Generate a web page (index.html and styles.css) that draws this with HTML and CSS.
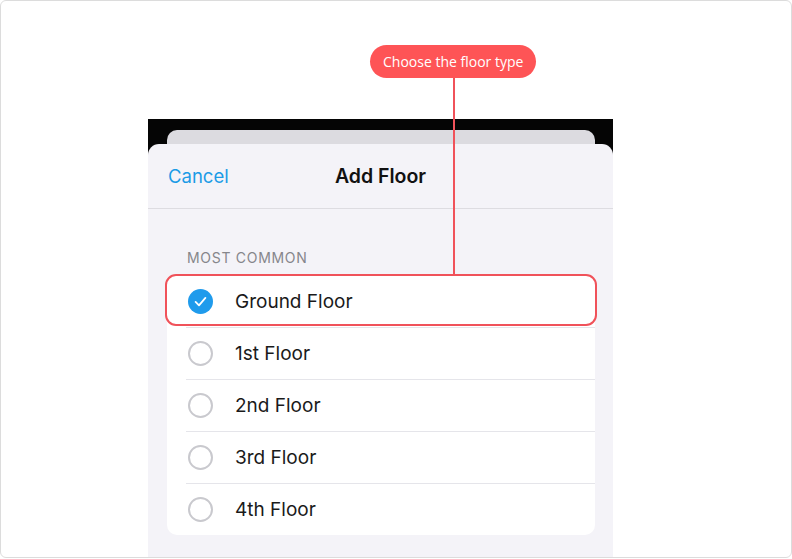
FILE: index.html
```html
<!DOCTYPE html>
<html lang="en">

<head>
    <meta charset="UTF-8">
    <meta name="viewport" content="width=device-width, initial-scale=1.0">
    <title>Add Floor</title>
    <link rel="stylesheet" href="styles.css">
</head>

<body>
    <div class="frame">
        <div class="phone">
            <div class="back-card"></div>
            <div class="sheet">
                <div class="sheet-header">
                    <a href="#" class="cancel">Cancel</a>
                    <h1>Add Floor</h1>
                    <span></span>
                </div>
                <div class="section-label">MOST COMMON</div>
                <ul class="floor-list">
                    <li class="selected">
                        <span class="radio">
                            <svg width="25" height="25" viewBox="0 0 25 25">
                                <circle cx="12.5" cy="12.5" r="12.5" fill="#1f9bec" />
                                <path d="M7.6 12.9 L11 16.3 L17.4 8.9" fill="none" stroke="#fff" stroke-width="1.8"
                                    stroke-linecap="round" stroke-linejoin="round" />
                            </svg>
                        </span>
                        <span class="label">Ground Floor</span>
                        <span class="highlight"></span>
                    </li>
                    <li><span class="radio"></span><span class="label">1st Floor</span></li>
                    <li><span class="radio"></span><span class="label">2nd Floor</span></li>
                    <li><span class="radio"></span><span class="label">3rd Floor</span></li>
                    <li><span class="radio"></span><span class="label">4th Floor</span></li>
                </ul>
            </div>
        </div>

        <!-- annotation over the screenshot -->
        <div class="callout">
            <div class="pill">Choose the floor type</div>
            <div class="connector"></div>
        </div>
    </div>
</body>

</html>
```

FILE: styles.css
```css
/* page frame */
html,
body {
    margin: 0;
    padding: 0;
    background: #fff;
}

.frame {
    position: relative;
    box-sizing: border-box;
    width: 792px;
    height: 558px;
    border: 1px solid #dcdcdc;
    border-radius: 6px;
    overflow: hidden;
    padding-top: 118px;
    font-family: Inter, "Liberation Sans", sans-serif;
}

/* phone screenshot */
.phone {
    width: 465px;
    height: 100%;
    margin-left: 147px;
    background: #050505;
    padding-top: 11px;
    box-sizing: border-box;
    display: flex;
    flex-direction: column;
}

.back-card {
    height: 14px;
    margin: 0 18px 0 19px;
    background: #dcdbe0;
    border-radius: 10px 10px 0 0;
}

.sheet {
    flex: 1;
    background: #f4f3f8;
    border-radius: 11px 11px 0 0;
}

.sheet-header {
    display: grid;
    grid-template-columns: 1fr auto 1fr;
    align-items: center;
    height: 64px;
    padding: 0 20px;
    border-bottom: 1px solid #dddce1;
}

.cancel {
    color: #1b9be6;
    text-decoration: none;
    font-size: 18.5px;
}

.sheet-header h1 {
    margin: 0;
    font-size: 19.5px;
    font-weight: 600;
    color: #111;
}

.section-label {
    padding: 40px 0 0 39px;
    height: 26px;
    font-size: 14px;
    letter-spacing: 0.7px;
    color: #86868b;
    line-height: 18px;
}

.floor-list {
    list-style: none;
    margin: 0 18px 0 19px;
    padding: 0;
    background: #fff;
    border-radius: 10px;
}

.floor-list li {
    position: relative;
    display: flex;
    align-items: center;
    height: 52px;
    padding-left: 21px;
}

.floor-list li + li::before {
    content: "";
    position: absolute;
    top: 0;
    left: 19px;
    right: 0;
    height: 1px;
    background: #e5e5ea;
}

.radio {
    width: 25px;
    height: 25px;
    box-sizing: border-box;
    border: 2px solid #c9c9ce;
    border-radius: 50%;
    margin-right: 22px;
}

.selected .radio {
    border: none;
}

.radio svg {
    display: block;
}

.label {
    font-size: 19px;
    color: #1a1a1a;
}

.highlight {
    position: absolute;
    top: -1px;
    left: -2px;
    right: -2px;
    bottom: 1px;
    border: 2px solid #f0525a;
    border-radius: 11px;
}

/* annotation */
.callout {
    position: absolute;
    left: 369px;
    top: 44px;
    display: flex;
    flex-direction: column;
    align-items: center;
}

.pill {
    height: 33px;
    line-height: 33px;
    padding: 0 13px;
    border-radius: 17px;
    background: #fe5456;
    color: #fff;
    font-family: "Open Sans", Lato, sans-serif;
    font-size: 14px;
    white-space: nowrap;
}

.connector {
    width: 2px;
    height: 196px;
    margin-left: 2px;
    background: #f0525a;
}
```
